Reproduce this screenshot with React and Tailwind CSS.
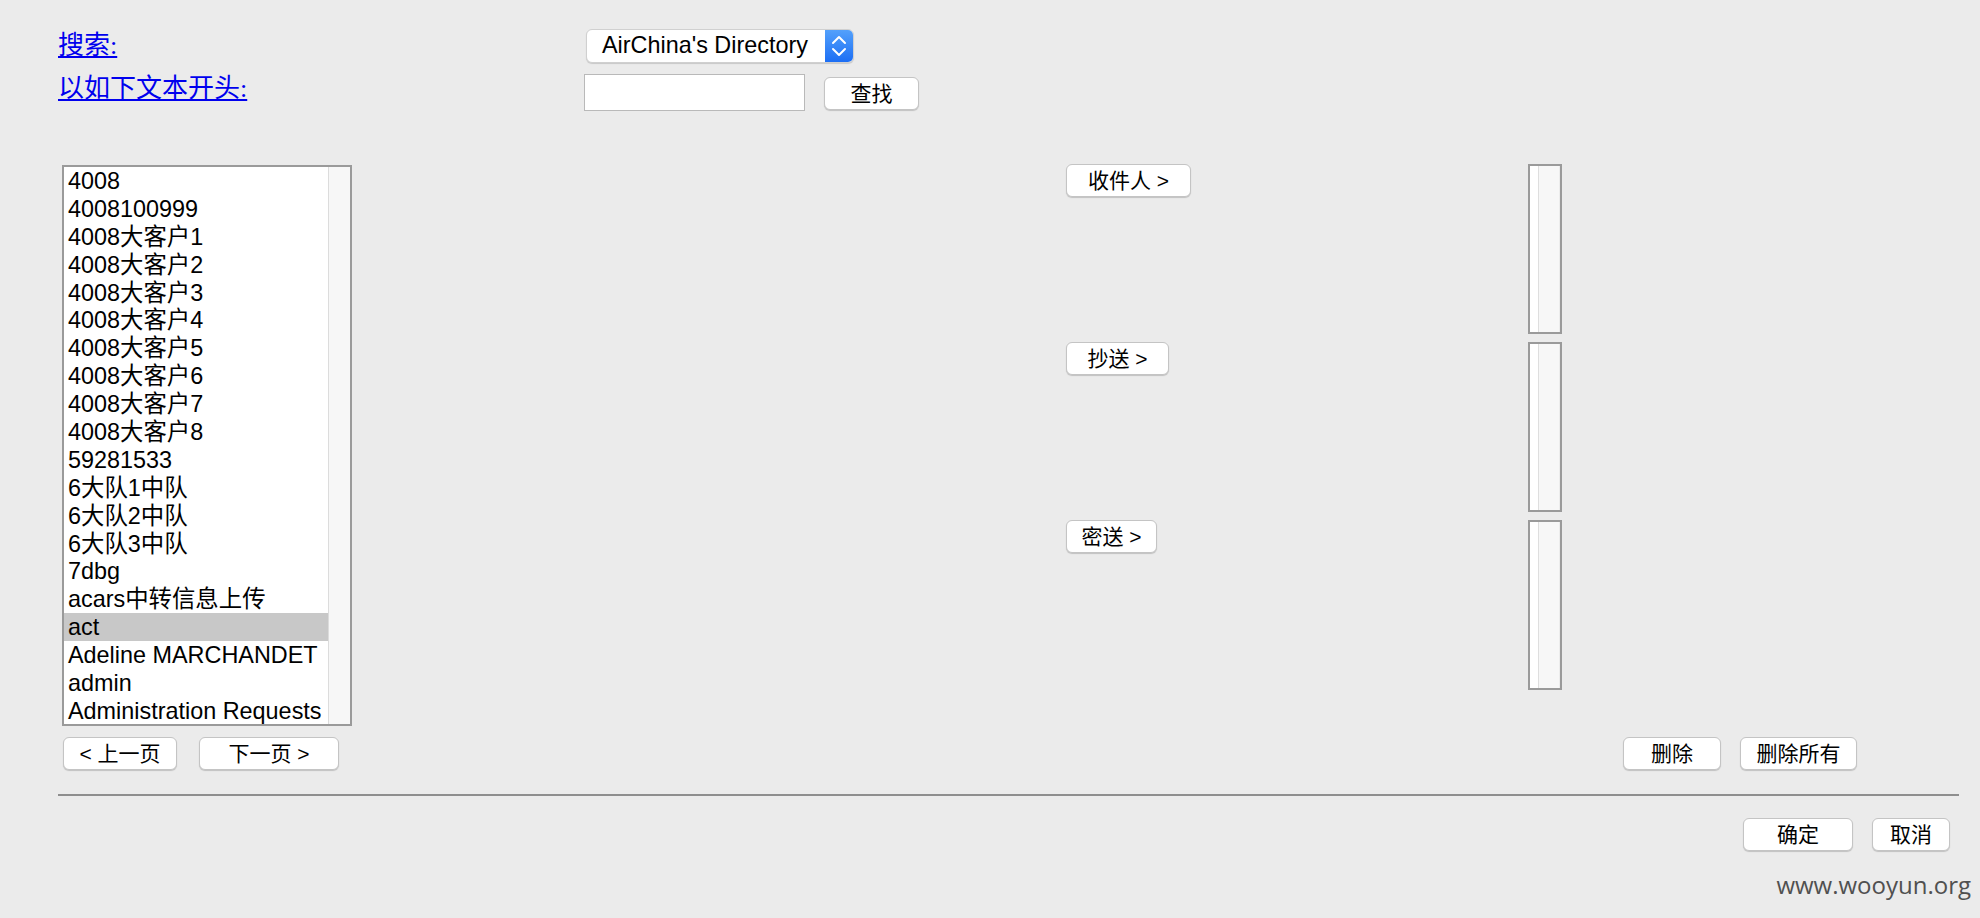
import React from 'react';

const items = [
  '4008',
  '4008100999',
  '4008大客户1',
  '4008大客户2',
  '4008大客户3',
  '4008大客户4',
  '4008大客户5',
  '4008大客户6',
  '4008大客户7',
  '4008大客户8',
  '59281533',
  '6大队1中队',
  '6大队2中队',
  '6大队3中队',
  '7dbg',
  'acars中转信息上传',
  'act',
  'Adeline MARCHANDET',
  'admin',
  'Administration Requests',
];

const btn =
  "bg-white border border-[#c4c4c4] rounded-[6px] shadow-[0_1px_1px_rgba(0,0,0,0.18)] h-[33px] text-[21px] leading-none text-black flex items-center justify-center";

// empty recipient list box (just the scroll track)
const SmallBox = () => (
  <div className="w-[34px] h-[170px] border-2 border-[#9a9a9a] flex bg-white">
    <div className="w-[8px] bg-white" />
    <div className="flex-1 bg-[#f7f7f7] border-l border-[#dedede] border-r border-r-[#ececec]" />
  </div>
);

const App = () => {
  return (
    <div className="relative min-h-[918px] bg-[#ebebeb] pl-[58px] pr-[21px] pt-[29px] font-['Liberation_Sans','Noto_Sans_CJK_SC',sans-serif]">
      {/* search header */}
      <div className="grid grid-cols-[528px_1fr] gap-y-[11px]">
        <div className="h-[34px] flex items-start pt-[4px]">
          <a href="#" className="text-[#0000ee] underline text-[26px] leading-[26px] font-['Liberation_Serif','Noto_Sans_CJK_SC',serif]">搜索:</a>
        </div>
        <div className="flex">
          <div className="w-[268px] h-[34px] bg-white rounded-[6px] border border-[#d0d0d0] shadow-[0_1px_1px_rgba(0,0,0,0.15)] flex items-center overflow-hidden">
            <span className="flex-1 pl-[15px] text-[23.4px] text-black whitespace-nowrap">AirChina's Directory</span>
            <div className="w-[28px] h-full bg-gradient-to-b from-[#53a0fb] to-[#1c6ef4] flex items-center justify-center">
              <svg width="28" height="34" viewBox="0 0 28 34" fill="none" stroke="white" strokeWidth="2" strokeLinecap="round" strokeLinejoin="round">
                <path d="M8 14 L14 8 L20 14" />
                <path d="M8 20 L14 26 L20 20" />
              </svg>
            </div>
          </div>
        </div>
        <div className="h-[37px] flex items-start pt-[2px]">
          <a href="#" className="text-[#0000ee] underline text-[26px] leading-[26px] font-['Liberation_Serif','Noto_Sans_CJK_SC',serif]">以如下文本开头:</a>
        </div>
        <div className="flex items-start ml-[-2px]">
          <input className="w-[221px] h-[37px] bg-white border border-[#b9b9b9] outline-none" />
          <button className={`${btn} w-[95px] h-[32px] ml-[19px] mt-[3px]`}>查找</button>
        </div>
      </div>

      {/* lists */}
      <div className="flex mt-[53px]">
        <div className="w-[1008px]">
          <div className="ml-[4px] mt-[1px] w-[290px] h-[561px] border-2 border-[#9a9a9a] bg-white flex overflow-hidden">
            <div className="flex-1 overflow-hidden">
              {items.map((it) => (
                <div
                  key={it}
                  className={`h-[27.9px] leading-[28px] pl-[4px] text-[23.4px] text-black whitespace-nowrap ${it === 'act' ? 'bg-[#c8c8c8]' : ''}`}
                >
                  {it}
                </div>
              ))}
            </div>
            <div className="w-[22px] bg-[#f7f7f7] border-l border-[#dcdcdc]" />
          </div>
        </div>
        <div className="flex flex-col gap-[8px]">
          {[
            ['收件人 >', 'w-[125px]'],
            ['抄送 >', 'w-[103px]'],
            ['密送 >', 'w-[91px]'],
          ].map(([label, w]) => (
            <div key={label} className="flex">
              <div className="w-[462px]">
                <button className={`${btn} ${w}`}>{label}</button>
              </div>
              <SmallBox />
            </div>
          ))}
        </div>
      </div>

      {/* paging / delete */}
      <div className="flex mt-[11px]">
        <div className="w-[1565px] flex gap-[22px] pl-[5px]">
          <button className={`${btn} w-[114px]`}>&lt; 上一页</button>
          <button className={`${btn} w-[140px]`}>下一页 &gt;</button>
        </div>
        <div className="flex gap-[19px]">
          <button className={`${btn} w-[98px]`}>删除</button>
          <button className={`${btn} w-[117px]`}>删除所有</button>
        </div>
      </div>

      <div className="mt-[24px] h-[2px] bg-[#8e8e8e]" />

      <div className="flex justify-end gap-[19px] mt-[22px] pr-[9px]">
        <button className={`${btn} w-[110px] h-[32px]`}>确定</button>
        <button className={`${btn} w-[78px] h-[32px]`}>取消</button>
      </div>

      <div className="absolute right-[9px] top-[868px] text-[24px] leading-[34px] text-[#505050] font-['Open_Sans',sans-serif]">
        www.wooyun.org
      </div>
    </div>
  );
};

export default App;
